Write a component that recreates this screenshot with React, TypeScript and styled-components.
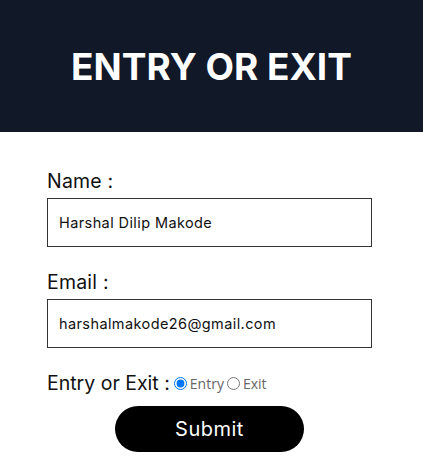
import styled, { createGlobalStyle } from 'styled-components'
import { useState } from 'react'

const GlobalStyle = createGlobalStyle`
  body {
    margin: 0;
    background: #fff;
    font-family: Inter, "Noto Sans", sans-serif;
  }
`

export default function App() {
  const [name, setName] = useState('Harshal Dilip Makode')
  const [email, setEmail] = useState('harshalmakode26@gmail.com')
  const [kind, setKind] = useState<'entry' | 'exit'>('entry')

  return (
    <>
      <GlobalStyle />
      <Header>
        <Title>ENTRY OR EXIT</Title>
      </Header>
      <Form onSubmit={(e) => e.preventDefault()}>
        <Field>
          <Label htmlFor="name">Name :</Label>
          <Input id="name" value={name} onChange={(e) => setName(e.target.value)} />
        </Field>
        <Field>
          <Label htmlFor="email">Email :</Label>
          <Input id="email" value={email} onChange={(e) => setEmail(e.target.value)} />
        </Field>
        <RadioRow>
          <GroupLabel>Entry or Exit :</GroupLabel>
          <RadioLabel>
            <Radio
              type="radio"
              name="kind"
              checked={kind === 'entry'}
              onChange={() => setKind('entry')}
            />
            Entry
          </RadioLabel>
          <RadioLabel>
            <Radio
              type="radio"
              name="kind"
              checked={kind === 'exit'}
              onChange={() => setKind('exit')}
            />
            Exit
          </RadioLabel>
        </RadioRow>
        <SubmitButton type="submit">Submit</SubmitButton>
      </Form>
    </>
  )
}

const Header = styled.header`
  height: 132px;
  background-color: #111827;
  display: flex;
  align-items: center;
  justify-content: center;
`

const Title = styled.h1`
  margin: 0;
  color: #fff;
  font-size: 37px;
  font-weight: 700;
  letter-spacing: 0;
`

const Form = styled.form`
  width: 325px;
  margin: 0 auto;
  padding-top: 36px;
  display: flex;
  flex-direction: column;
  transform: translateX(-2px);
`

const Field = styled.div`
  display: flex;
  flex-direction: column;
  margin-bottom: 22px;
`

const Label = styled.label`
  font-size: 19.5px;
  letter-spacing: 0.2px;
  color: #111;
  line-height: 26px;
  margin-bottom: 4px;
`

const GroupLabel = styled.span`
  font-size: 19.5px;
  color: #111;
  line-height: 26px;
`

const Input = styled.input`
  box-sizing: border-box;
  width: 325px;
  height: 49px;
  border: 1px solid #333;
  padding: 0 11px;
  font-family: inherit;
  font-size: 14.5px;
  letter-spacing: 0.4px;
  color: #111;
  outline: none;
`

const RadioRow = styled.div`
  display: flex;
  align-items: baseline;
`

const RadioLabel = styled.label`
  display: inline-flex;
  align-items: center;
  font-family: "Open Sans", sans-serif;
  font-size: 14px;
  color: #666;
  margin-left: 3px;

  &:first-of-type {
    margin-left: 4px;
  }
`

const Radio = styled.input`
  width: 13px;
  height: 13px;
  margin: 0 3px 0 0;
`

const SubmitButton = styled.button`
  align-self: center;
  margin-top: 10px;
  width: 189px;
  height: 46px;
  border: none;
  border-radius: 23px;
  background: #000;
  color: #fff;
  font-family: inherit;
  font-size: 20px;
  letter-spacing: 0.5px;
  cursor: pointer;
`
